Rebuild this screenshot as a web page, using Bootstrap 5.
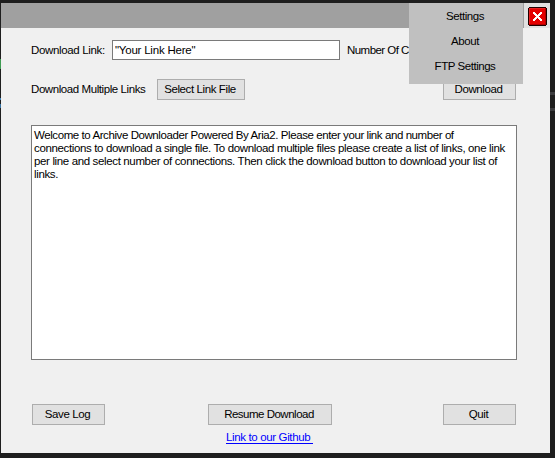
<!DOCTYPE html>
<html lang="en">
<head>
<meta charset="utf-8">
<meta name="viewport" content="width=device-width, initial-scale=1">
<title>Archive Downloader</title>
<link href="https://cdn.jsdelivr.net/npm/bootstrap@5.3.0/dist/css/bootstrap.min.css" rel="stylesheet">
<style>
body{background:#1e1e1e;font:11.5px/13px "Liberation Sans",Arial,sans-serif;letter-spacing:-.36px;color:#000;width:555px;height:458px;padding:3px 5px 5px 1px}
.app-window{width:549px;height:450px;background:#f0f0f0}
.titlebar{height:25px;background:#a0a0a0}
.close-area{width:26px;background:#e0e0e0;padding:4px 0 0 4px}
.close-area svg{display:block}
.main-area{padding:12px 33px 0 30px}
.link-row{height:20px}
.form-control.link-input{width:228px;height:20px;border:1px solid #7a7a7a;padding:0 2px;font-size:11.5px;line-height:18px;letter-spacing:-.22px;color:#000;margin:0 7px}
.win-btn.btn{height:21px;border:1px solid #adadad;background:#e1e1e1;color:#000;font-size:11.5px;line-height:19px;letter-spacing:-.4px;padding:0 2px 0 0;width:73px}
.multi-row{margin-top:19px;height:21px;padding-right:1px}
.win-btn.w-select{width:88px}
.win-btn.w-resume{width:124px;margin-right:8px;letter-spacing:-.5px}
.lbl-link{width:74px;letter-spacing:-.34px}
.lbl-multi{width:126px;letter-spacing:-.42px}
.lbl-count{letter-spacing:-.55px}
.log{height:235px;margin-top:25px;border:1px solid #7a7a7a;background:#fff;padding:3px 2px}
.log-first{letter-spacing:-.42px}
.foot{margin:44px 1px 0}
.gh{color:#00f;width:87px;margin:6px 0 0 195px;height:13px;border-bottom:1px solid #00f;letter-spacing:-.36px}
.top-menu{left:409px;top:3px;width:114px;height:81px;background:#c0c0c0;padding-right:2px}
.top-menu a{height:25px;line-height:26px;color:#000;letter-spacing:-.45px}
.rule-mark{left:550px;width:5px;height:3px;background:#3c3c3e}
.edge-mark{left:0;width:1px}
.edge-green{top:59px;height:10px;background:#3f9b52}
.edge-blue{top:98px;height:2px;background:#3d7fb5}
.edge-blue-low{top:104px;height:4px;background:#35709f}
</style>
</head>
<body class="position-relative overflow-hidden">
<div class="app-window">
  <header class="titlebar d-flex justify-content-end">
    <div class="close-area">
      <svg width="19" height="19" viewBox="0 0 19 19" shape-rendering="crispEdges">
        <path d="M1 0H18V1H19V18H18V19H1V18H0V1H1Z" fill="#200000"/>
        <path d="M1 1H18V18H1Z" fill="#b00000"/>
        <path d="M1 1H17V2H2V17H1Z" fill="#e82020"/>
        <path d="M2 2H17V17H2Z" fill="#e40000"/>
        <path d="M5 5H7V6H8V7H9V8H10V7H11V6H12V5H14V7H13V8H12V9H11V10H12V11H13V12H14V14H12V13H11V12H10V11H9V12H8V13H7V14H5V12H6V11H7V10H8V9H7V8H6V7H5Z" fill="#fff"/>
      </svg>
    </div>
  </header>
  <main class="main-area">
    <div class="link-row d-flex align-items-center text-nowrap">
      <label class="lbl-link" for="link">Download Link:</label>
      <input id="link" class="form-control link-input rounded-0" value='"Your Link Here"'>
      <span class="lbl-count">Number Of Co</span>
    </div>
    <div class="multi-row d-flex align-items-center text-nowrap">
      <span class="lbl-multi">Download Multiple Links</span>
      <button class="btn win-btn w-select rounded-0">Select Link File</button>
      <button class="btn win-btn rounded-0 ms-auto">Download</button>
    </div>
    <div class="log text-nowrap">
      <span class="log-first">Welcome to Archive Downloader Powered By Aria2. Please enter your link and number of</span><br>
      connections to download a single file. To download multiple files please create a list of links, one link<br>
      per line and select number of connections. Then click the download button to download your list of<br>
      links.
    </div>
    <div class="foot d-flex justify-content-between">
      <button class="btn win-btn rounded-0">Save Log</button>
      <button class="btn win-btn w-resume rounded-0">Resume Download</button>
      <button class="btn win-btn rounded-0">Quit</button>
    </div>
    <a class="gh d-block text-decoration-none text-nowrap" href="#">Link to our Github</a>
  </main>
</div>
<nav class="top-menu position-absolute d-flex flex-column text-center">
  <a class="text-decoration-none" href="#">Settings</a>
  <a class="text-decoration-none" href="#">About</a>
  <a class="text-decoration-none" href="#">FTP Settings</a>
</nav>
<div class="edge-mark edge-green position-absolute"></div>
<div class="edge-mark edge-blue position-absolute"></div>
<div class="edge-mark edge-blue-low position-absolute"></div>
<div class="rule-mark position-absolute" style="top:92px"></div>
<div class="rule-mark position-absolute" style="top:108px"></div>
<script src="https://cdn.jsdelivr.net/npm/bootstrap@5.3.0/dist/js/bootstrap.bundle.min.js"></script>
</body>
</html>
